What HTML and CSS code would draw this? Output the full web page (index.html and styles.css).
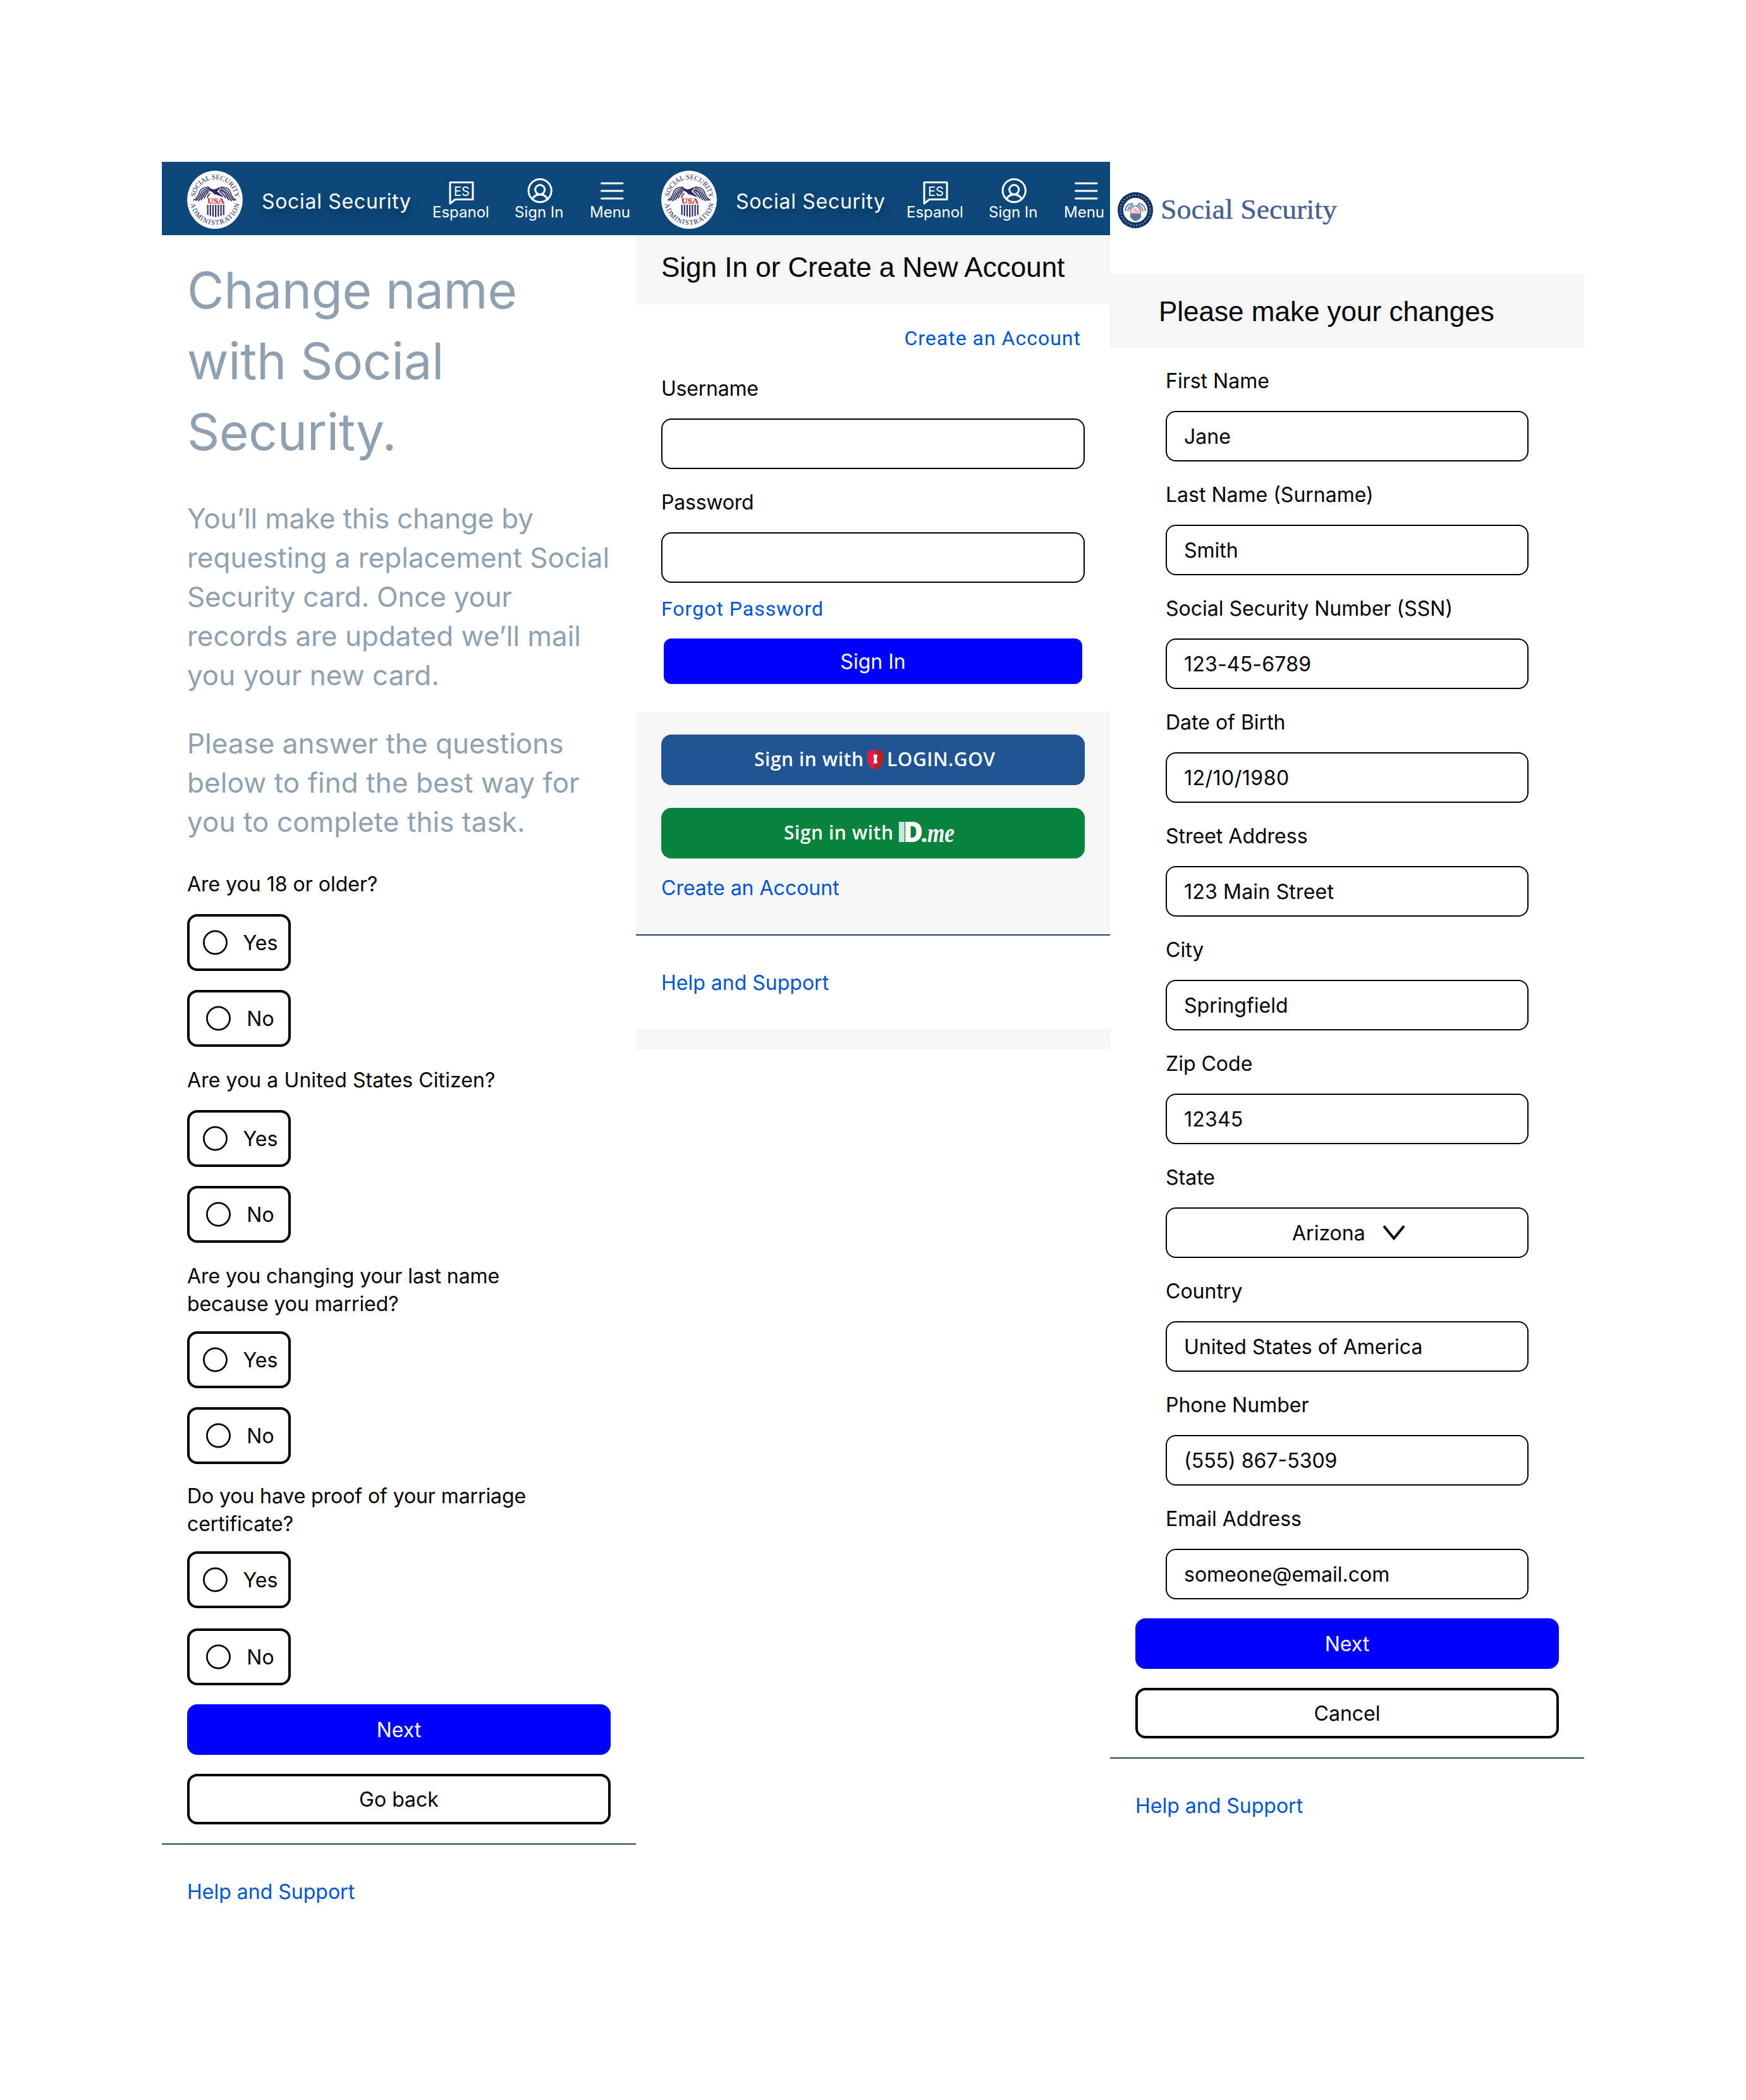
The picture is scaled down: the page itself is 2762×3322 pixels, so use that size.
FILE: index.html
```html
<!DOCTYPE html>
<html lang="en">
<head>
<meta charset="utf-8">
<title>Social Security</title>
<link rel="stylesheet" href="styles.css">
</head>
<body>
<svg class="sprite" aria-hidden="true">
  <defs>
    <path id="arc-top" d="M12.8 41.5A31.6 32.5 0 0 1 75.4 41.5"/>
    <path id="arc-bottom" d="M5.4 52.5A39.2 39.5 0 0 0 82.8 52.5"/>
    <symbol id="seal" viewBox="0 0 88 92">
      <ellipse cx="44" cy="46" rx="44" ry="46" fill="#fdfdfe"/>
      <g class="seal-text">
        <text><textPath href="#arc-top" textLength="93" lengthAdjust="spacing">SOCIAL SECURITY</textPath></text>
        <text><textPath href="#arc-bottom" textLength="111" lengthAdjust="spacing">ADMINISTRATION</textPath></text>
      </g>
      <g fill="none" stroke="#26265c" stroke-width="1.7" stroke-linecap="round">
        <path d="M10.500 46.500C15 45 17 42 19 36C21 29 25 26 34 26"/>
        <path d="M14 47C18 45 20 41 22 36C24 31 27 28.500 34 28"/>
        <path d="M18 47.500C22 44 22.500 40 25 36C27 32.500 30 31 34 30"/>
        <path d="M22.500 46C25 43 25 40 27.500 36.500C29.500 33.500 32 32.500 35 32"/>
        <path d="M27 43C28.500 40 30 37 33 34.500"/>
        <path d="M32 42C33 40 34 38 36 36"/>
        <path d="M77.500 46.500C73 45 71 42 69 36C67 29 63 26 54 26"/>
        <path d="M74 47C70 45 68 41 66 36C64 31 61 28.500 54 28"/>
        <path d="M70 47.500C66 44 65.500 40 63 36C61 32.500 58 31 53 30"/>
        <path d="M65.500 46C63 43 63 40 60.500 36.500C58.500 33.500 56 32 51 31"/>
        <path d="M61 43C59.500 40 57 37 52 33"/>
      </g>
      <path fill="#26265c" d="M33 25.500C36 27 38 29.500 42 29.500C46 29.500 48 27 51 26.500L55 25.500C51 29 48 31 48 33C51 36 54 38 58 41.500C53 41 50 39 47 38C44 38.500 42 36 40 34C38 33 36 32 34 29Z"/>
      <text class="seal-usa" x="45.500" y="52" textLength="27" lengthAdjust="spacingAndGlyphs">USA</text>
      <path fill="none" stroke="#26265c" stroke-width="2.100" d="M32.700 54V70M36.800 54V71.500M41 54V72.500M45.200 54V73.500M49.400 54V72.500M53.600 54V71.500M57.800 54V70"/>
    </symbol>
  </defs>
</svg>

<main class="board">
  <section class="screen">
    <header class="topbar">
      <svg class="seal"><use href="#seal"/></svg>
      <div class="brand">Social Security</div>
      <nav class="nav">
        <a class="nav-item nav-es">
          <svg class="nav-icon" viewBox="0 0 90 65"><path d="M28 32.500H64V59.500H36L28 66Z"/><text x="34" y="53.700">ES</text></svg>
          <span>Espanol</span>
        </a>
        <a class="nav-item nav-sign">
          <svg class="nav-icon" viewBox="0 0 78 65"><g transform="translate(40.200 45.600) scale(.1885) translate(-128 -128)" stroke-width="16"><circle cx="128" cy="128" r="96"/><circle cx="128" cy="120" r="40"/><path d="M63.800 199.400a72 72 0 0 1 128.400 0"/></g></svg>
          <span>Sign In</span>
        </a>
        <a class="nav-item nav-menu">
          <svg class="nav-icon" viewBox="0 0 64 65"><path d="M18.500 34H52M18.500 46H52M18.500 58H52"/></svg>
          <span>Menu</span>
        </a>
      </nav>
    </header>
    <div class="content">
      <h1 class="title">Change name<br>with Social<br>Security.</h1>
      <p class="lead"><span class="tighter">You’ll make this change by</span> requesting a replacement Social <span class="tighter">Security card. Once your</span> records are updated we’ll mail you your new card.</p>
      <p class="lead lead-next">Please answer the questions <span class="looser">below to find the best way for you to complete this task.</span></p>

      <div class="question question-first">Are you 18 or older?</div>
      <div class="options">
        <label class="option"><svg class="radio" viewBox="0 0 48 48"><circle cx="23.500" cy="24" r="18.100"/></svg><span class="txt">Yes</span></label>
        <label class="option"><svg class="radio" viewBox="0 0 48 48"><circle cx="23.500" cy="24" r="18.100"/></svg><span class="txt">No</span></label>
      </div>
      <div class="question"><span class="looser">Are you a United States Citizen?</span></div>
      <div class="options">
        <label class="option"><svg class="radio" viewBox="0 0 48 48"><circle cx="23.500" cy="24" r="18.100"/></svg><span class="txt">Yes</span></label>
        <label class="option"><svg class="radio" viewBox="0 0 48 48"><circle cx="23.500" cy="24" r="18.100"/></svg><span class="txt">No</span></label>
      </div>
      <div class="question question-long">Are you changing your last name<br>because you married?</div>
      <div class="options">
        <label class="option"><svg class="radio" viewBox="0 0 48 48"><circle cx="23.500" cy="24" r="18.100"/></svg><span class="txt">Yes</span></label>
        <label class="option"><svg class="radio" viewBox="0 0 48 48"><circle cx="23.500" cy="24" r="18.100"/></svg><span class="txt">No</span></label>
      </div>
      <div class="question question-long question-last">Do you have proof of your marriage<br>certificate?</div>
      <div class="options options-last">
        <label class="option"><svg class="radio" viewBox="0 0 48 48"><circle cx="23.500" cy="24" r="18.100"/></svg><span class="txt">Yes</span></label>
        <label class="option"><svg class="radio" viewBox="0 0 48 48"><circle cx="23.500" cy="24" r="18.100"/></svg><span class="txt">No</span></label>
      </div>
      <div class="actions">
        <div class="btn btn-primary"><span class="txt">Next</span></div>
        <div class="btn btn-outline"><span class="txt">Go back</span></div>
      </div>
    </div>
    <footer class="footer"><a class="link">Help and Support</a></footer>
  </section>

  <section class="screen">
    <header class="topbar">
      <svg class="seal"><use href="#seal"/></svg>
      <div class="brand">Social Security</div>
      <nav class="nav">
        <a class="nav-item nav-es">
          <svg class="nav-icon" viewBox="0 0 90 65"><path d="M28 32.500H64V59.500H36L28 66Z"/><text x="34" y="53.700">ES</text></svg>
          <span>Espanol</span>
        </a>
        <a class="nav-item nav-sign">
          <svg class="nav-icon" viewBox="0 0 78 65"><g transform="translate(40.200 45.600) scale(.1885) translate(-128 -128)" stroke-width="16"><circle cx="128" cy="128" r="96"/><circle cx="128" cy="120" r="40"/><path d="M63.800 199.400a72 72 0 0 1 128.400 0"/></g></svg>
          <span>Sign In</span>
        </a>
        <a class="nav-item nav-menu">
          <svg class="nav-icon" viewBox="0 0 64 65"><path d="M18.500 34H52M18.500 46H52M18.500 58H52"/></svg>
          <span>Menu</span>
        </a>
      </nav>
    </header>
    <h2 class="band band-signin">Sign In or Create a New Account</h2>
    <div class="content">
      <a class="link link-create">Create an Account</a>
      <div class="label label-user"><span class="tighter">Username</span></div>
      <div class="input"></div>
      <div class="label"><span class="tighter">Password</span></div>
      <div class="input"></div>
      <a class="link link-forgot">Forgot Password</a>
      <div class="btn btn-signin"><span class="txt">Sign In</span></div>
    </div>
    <div class="partners">
      <div class="partner partner-login">
        <svg class="partner-art" viewBox="0 0 670 80">
          <text x="147" y="49.500" textLength="173">Sign in with</text>
          <path fill="#e31c3d" d="M326 26Q332 26 338.700 24V56Q326 50 326 40Z"/>
          <path fill="#b81f26" d="M338.700 24Q345 26 351.500 26V40Q351.500 50 338.700 56Z"/>
          <path fill="#fff" d="M335.600 34.500a3.200 3.200 0 0 1 6.400 0L340.800 38.500L342 45.500H335.600L336.800 38.500Z"/>
          <text x="357" y="49.500" textLength="171">LOGIN.GOV</text>
        </svg>
      </div>
      <div class="partner partner-id">
        <svg class="partner-art" viewBox="0 0 670 80">
          <text x="194" y="49.500" textLength="173">Sign in with</text>
          <text class="id-d id-i" x="372.500" y="53.500">I</text>
          <text class="id-d" x="383" y="53.500" textLength="31" lengthAdjust="spacingAndGlyphs">D</text>
          <text class="id-d id-dot" x="411" y="53.500">.</text>
          <text class="id-me" x="421" y="53.500" textLength="43" lengthAdjust="spacingAndGlyphs">me</text>
        </svg>
      </div>
      <a class="link link-partner">Create an Account</a>
    </div>
    <footer class="footer"><a class="link">Help and Support</a></footer>
    <div class="strip"></div>
  </section>

  <section class="screen">
    <header class="masthead">
      <svg class="mini-seal" viewBox="0 0 56 57">
        <ellipse cx="28" cy="28.500" rx="28" ry="28.500" fill="#0d2f5f"/>
        <ellipse cx="28" cy="28.500" rx="23.500" ry="24" fill="none" stroke="#60789f" stroke-width="3.500" stroke-dasharray="2.200 2.600"/>
        <ellipse cx="28" cy="28.500" rx="19.300" ry="19.600" fill="#fdfdfe"/>
        <path fill="none" stroke="#7288a6" stroke-width="2" d="M12 30Q13 18 24 18M16 30Q17 22 25 20M20 28Q21 24 27 22M44 30Q43 18 32 18M40 30Q39 22 31 20M36 28Q35 24 28 21"/>
        <text class="mini-usa" x="28.500" y="32.500">USA</text>
        <path fill="#5d7798" d="M20 33.500H37V40Q34 44 28.500 46Q23 44 20 40Z"/>
      </svg>
      <svg class="wordmark" viewBox="0 0 290 60"><text x="0" y="42" textLength="279" lengthAdjust="spacingAndGlyphs">Social Security</text></svg>
    </header>
    <h2 class="band band-changes">Please make your changes</h2>
    <div class="form">
      <div class="label">First Name</div>
      <div class="input"><span class="txt">Jane</span></div>
      <div class="label">Last Name (Surname)</div>
      <div class="input"><span class="txt">Smith</span></div>
      <div class="label">Social Security Number (SSN)</div>
      <div class="input"><span class="txt digits">123-45-6789</span></div>
      <div class="label">Date of Birth</div>
      <div class="input"><span class="txt date">12/10/1980</span></div>
      <div class="label">Street Address</div>
      <div class="input"><span class="txt digits">123 Main Street</span></div>
      <div class="label">City</div>
      <div class="input"><span class="txt">Springfield</span></div>
      <div class="label">Zip Code</div>
      <div class="input"><span class="txt digits">12345</span></div>
      <div class="label">State</div>
      <div class="input select"><span class="txt">Arizona</span><svg class="chevron" viewBox="0 0 36 24"><path d="M2 1.500L18 21L34 1.500"/></svg></div>
      <div class="label">Country</div>
      <div class="input"><span class="txt">United States of America</span></div>
      <div class="label">Phone Number</div>
      <div class="input"><span class="txt">(555) 867-5309</span></div>
      <div class="label">Email Address</div>
      <div class="input"><span class="txt">someone@email.com</span></div>
    </div>
    <div class="content actions">
      <div class="btn btn-primary"><span class="txt">Next</span></div>
      <div class="btn btn-outline"><span class="txt">Cancel</span></div>
    </div>
    <footer class="footer"><a class="link">Help and Support</a></footer>
  </section>
</main>
</body>
</html>
```
FILE: styles.css
```css
* {
  box-sizing: border-box;
}

body {
  margin: 0;
  background: #fff;
  color: #000;
  font-family: Inter, "Liberation Sans", sans-serif;
  font-size: 32px;
  line-height: 44px;
}

.sprite {
  display: block;
  width: 0;
  height: 0;
}

.board {
  display: flex;
  align-items: flex-start;
  padding: 256px;
}

.screen {
  width: 750px;
  flex: none;
}

/* Top bar */
.topbar {
  display: flex;
  align-items: flex-start;
  height: 116px;
  padding-left: 40px;
  background: #0b4778;
  color: #fff;
}

.seal {
  flex: none;
  width: 88px;
  height: 92px;
  margin-top: 14px;
}

.seal-text {
  font: 11px "Liberation Serif", serif;
  fill: #26265c;
}

.seal-usa {
  font: bold 13.5px "Liberation Serif", serif;
  fill: #d3272b;
  stroke: #d3272b;
  stroke-width: 0.3;
  text-anchor: middle;
}

.brand {
  width: 236px;
  margin: 43px 0 0 30px;
  line-height: 40px;
  letter-spacing: 0.7px;
  white-space: nowrap;
  text-shadow: 0 8px 8px rgba(0, 0, 0, 0.25);
}

.nav {
  display: flex;
  margin-left: 34px;
  font-size: 24px;
  line-height: 29px;
}

.nav-item {
  display: flex;
  flex-direction: column;
  white-space: nowrap;
}

.nav-es {
  width: 90px;
}

.nav-sign {
  width: 78px;
  margin-left: 40px;
}

.nav-menu {
  width: 64px;
  margin-left: 41px;
}

.nav-icon {
  width: 100%;
  height: 65px;
  overflow: visible;
  fill: none;
  stroke: #fff;
  stroke-width: 3;
  stroke-linecap: round;
  stroke-linejoin: round;
}

.nav-icon text {
  font-size: 20px;
  fill: #fff;
  stroke: none;
}

/* Shared pieces */
.content {
  padding: 0 40px;
}

.tighter {
  letter-spacing: -0.22px;
}

.looser {
  letter-spacing: 0.08px;
}

.txt {
  padding-top: 1px;
  line-height: 41px;
  white-space: nowrap;
}

.btn {
  display: flex;
  align-items: center;
  justify-content: center;
  height: 80px;
  border-radius: 16px;
}

.btn-primary {
  background: #00f;
  color: #fff;
}

.btn-outline {
  border: 4px solid #000;
}

.btn-signin {
  height: 72px;
  margin: 28px 4px 44px;
  border-radius: 12px;
  background: #00f;
  color: #fff;
}

.actions {
  display: flex;
  flex-direction: column;
  gap: 30px;
  padding-top: 30px;
  padding-bottom: 30px;
}

.content > .actions {
  padding-left: 0;
  padding-right: 0;
}

.link {
  display: block;
  color: #0054d1;
}

.footer {
  padding: 53px 40px 51px;
  border-top: 2px solid #254664;
}

.band {
  margin: 0;
  background: #f6f6f6;
  font: 44px/50px "Liberation Sans", Arial, sans-serif;
}

.label {
  padding: 31px 0 25px;
}

.input {
  display: flex;
  align-items: center;
  height: 80px;
  padding-left: 27px;
  border: 2px solid #000;
  border-radius: 16px;
}

/* Questionnaire */
.title {
  margin: 0;
  padding-top: 31px;
  color: #8fa1b0;
  font-size: 80px;
  font-weight: 400;
  line-height: 112px;
  letter-spacing: -0.3px;
}

.lead {
  margin: 50px 0 0;
  color: #8fa1b0;
  font-size: 44px;
  line-height: 62px;
}

.lead-next {
  margin-top: 46px;
}

.question {
  padding: 31px 0 25px;
}

.question-first {
  padding-top: 46px;
}

.question-long {
  padding-bottom: 21px;
  letter-spacing: -0.09px;
}

.question-last {
  padding-top: 29px;
}

.options {
  display: flex;
  flex-direction: column;
  gap: 30px;
}

.options-last {
  gap: 32px;
}

.option {
  display: flex;
  align-items: center;
  justify-content: center;
  gap: 20px;
  width: 164px;
  height: 90px;
  border: 4px solid #000;
  border-radius: 16px;
}

.radio {
  flex: none;
  width: 48px;
  height: 48px;
  fill: none;
  stroke: #000;
  stroke-width: 2.7;
}

/* Sign in */
.band-signin {
  height: 110px;
  padding: 26px 40px 0;
}

.link-create,
.link-forgot {
  font-family: Roboto, sans-serif;
  line-height: 38px;
  letter-spacing: 1px;
}

.link-create {
  padding: 34px 6px 0 0;
  text-align: right;
}

.label-user {
  padding-top: 39px;
}

.link-forgot {
  padding-top: 22px;
}

.partners {
  padding: 36px 40px 51px;
  background: #f6f6f6;
}

.partner {
  height: 80px;
  border-radius: 16px;
}

.partner-login {
  background: #205493;
}

.partner-id {
  margin-top: 36px;
  background: #08833d;
}

.partner-art {
  display: block;
  width: 100%;
  height: 100%;
  font: 600 30px "Open Sans", sans-serif;
  fill: #fff;
}

.id-d {
  font: 800 45px "Open Sans", sans-serif;
}

.id-i {
  opacity: 0.8;
}

.id-dot {
  font-size: 34px;
}

.id-me {
  font: italic bold 44px "Liberation Serif", serif;
}

.link-partner {
  padding-top: 25px;
}

.strip {
  height: 32px;
  background: #f6f6f6;
}

/* Change form */
.masthead {
  display: flex;
  align-items: flex-start;
  height: 178px;
  padding: 48px 0 0 12px;
}

.mini-seal {
  width: 56px;
  height: 57px;
}

.mini-usa {
  font: bold 10px "Liberation Serif", serif;
  fill: #e8697c;
  text-anchor: middle;
}

.wordmark {
  width: 290px;
  height: 60px;
  margin-left: 12px;
  fill: #46618f;
  stroke: #46618f;
  stroke-width: 0.4;
  font: 44px "Liberation Serif", serif;
}

.band-changes {
  height: 116px;
  padding: 34px 0 0 77px;
}

.form {
  padding: 0 88px;
}

.digits {
  letter-spacing: 0.2px;
}

.date {
  letter-spacing: 0.5px;
}

.select {
  padding-left: 198px;
}

.chevron {
  width: 36px;
  height: 24px;
  margin-left: 27px;
  fill: none;
  stroke: #000;
  stroke-width: 4;
}
```
